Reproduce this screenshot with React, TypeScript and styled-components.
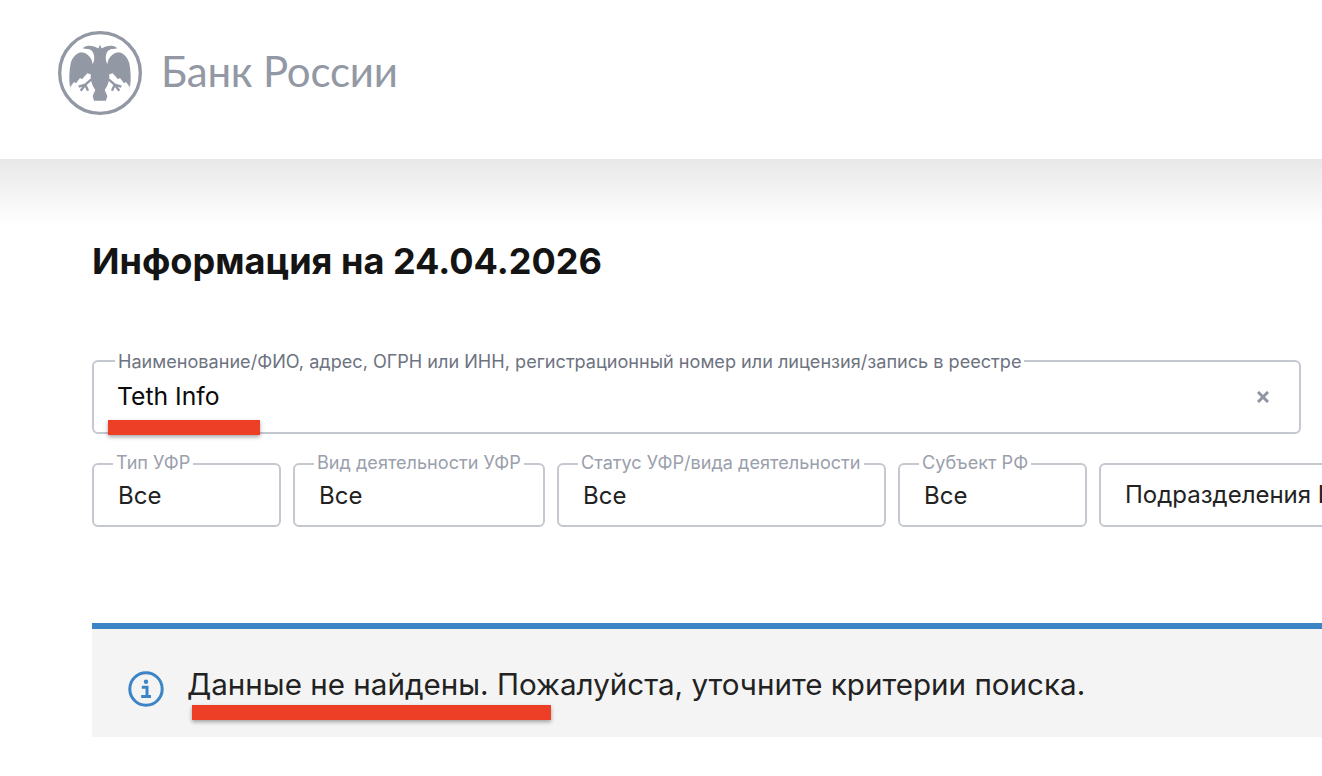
import React from 'react';
import styled, { createGlobalStyle } from 'styled-components';

const GlobalStyle = createGlobalStyle`
  html, body {
    margin: 0;
    background: #fff;
  }
  body {
    font-family: Inter, "Liberation Sans", sans-serif;
  }
`;

const Page = styled.div`
  position: relative;
  width: 1322px;
  height: 776px;
  overflow: hidden;
`;

const Header = styled.header`
  height: 159px;
  padding: 0 0 14px 58px;
  display: flex;
  align-items: center;
  gap: 19px;
  box-sizing: border-box;
`;

const LogoText = styled.div`
  margin-bottom: 4px;
  font-family: Lato, "Open Sans", sans-serif;
  font-size: 42px;
  letter-spacing: -0.2px;
  color: #9298a4;
`;

const Main = styled.main`
  padding: 78px 0 0 92px;
  background: linear-gradient(#e8e8e8, #ffffff 66px) no-repeat;
`;

const Title = styled.h1`
  margin: 0 0 66px;
  font-size: 36.1px;
  line-height: 48px;
  font-weight: 700;
  color: #141414;
`;

const Field = styled.fieldset<{ $width: number; $height: number }>`
  box-sizing: border-box;
  flex: none;
  width: ${({ $width }) => $width}px;
  height: ${({ $height }) => $height}px;
  margin: 0;
  padding: 0;
  border: 2px solid #c5c9cf;
  border-radius: 6px;
  display: flex;
  align-items: center;
  justify-content: space-between;
`;

const Legend = styled.legend<{ $strong?: boolean }>`
  margin-left: ${({ $strong }) => ($strong ? 21 : 19)}px;
  padding: ${({ $strong }) => ($strong ? '0 3px' : '0 3px 4px')};
  font-size: 18.1px;
  line-height: 20px;
  white-space: nowrap;
  color: ${({ $strong }) => ($strong ? '#6d7380' : '#9aa0ac')};
`;

const SearchValue = styled.div`
  margin: -11px 0 0 23px;
  font-size: 24.7px;
  color: #0a0a0a;
`;

const ClearButton = styled.div`
  margin: -9px 30px 0 0;
  display: flex;
  color: #8f95a1;
`;

const Filters = styled.div`
  display: flex;
  gap: 12px;
  margin-top: 18px;
  align-items: flex-end;
`;

const FilterValue = styled.div<{ $wide?: boolean }>`
  margin: ${({ $wide }) => ($wide ? '-2px 0 0 24px' : '-10px 0 0 24px')};
  font-size: 24px;
  white-space: nowrap;
  color: #222;
`;

const Alert = styled.div`
  width: 1300px;
  height: 114px;
  box-sizing: border-box;
  margin-top: 96px;
  padding: 12px 0 0 36px;
  border-top: 6px solid #3b84c5;
  background: #f4f4f4;
  display: flex;
  align-items: center;
  gap: 23px;
`;

const AlertText = styled.div`
  margin-bottom: 10px;
  font-size: 29.6px;
  color: #222;
  white-space: nowrap;
`;

const Marker = styled.div<{ $left: number; $top: number; $width: number }>`
  position: absolute;
  left: ${({ $left }) => $left}px;
  top: ${({ $top }) => $top}px;
  width: ${({ $width }) => $width}px;
  height: 15px;
  background: #ec3f25;
  box-shadow: 0 2px 4px rgba(0, 0, 0, 0.35);
`;

const Logo = () => (
  <svg width="84" height="84" viewBox="24 19 252 252" fill="#9298a4">
    <circle cx="150" cy="145" r="121" fill="none" stroke="#9298a4" strokeWidth="10" />
    {[false, true].map((mirror) => (
      <g key={String(mirror)} transform={mirror ? 'matrix(-1 0 0 1 300 0)' : undefined}>
        {/* head and neck */}
        <path d="M150 110 L150 74 C140 68 124 62 112 64 C106 65 102 67 98 71 L110 73 C122 72 130 80 132 92 C134 102 132 112 128 118 L150 130 Z" />
        {/* wing */}
        <path d="M128 118 C126 100 116 90 102 84 C96 82 92 82 88 84 C74 90 66 102 62 116 C58 138 56 162 60 188 L72 172 L78 176 L90 160 L96 164 L112 146 L126 150 Z" />
        {/* body and tail */}
        <path d="M150 110 L124 120 L122 160 C124 174 128 186 136 196 L128 214 L132 228 L150 228 Z" />
        {/* foot */}
        <path d="M124 164 L106 180 L86 186 M106 180 L92 198 M106 180 L114 198" fill="none" stroke="#9298a4" strokeWidth="7" />
      </g>
    ))}
    <path d="M150 60 L143 76 L150 100 L157 76 Z" />
  </svg>
);

const InfoIcon = () => (
  <svg width="36" height="36" viewBox="0 0 36 36" fill="none" stroke="#3b84c5" style={{ flex: 'none' }}>
    <circle cx="18" cy="18" r="16.2" strokeWidth="3" />
    <circle cx="18" cy="10.8" r="2.2" fill="#3b84c5" stroke="none" />
    <path d="M13.8 16.2 H19 V25.6 M13.2 25.6 H23" strokeWidth="3" />
  </svg>
);

const filters = [
  { label: 'Тип УФР', width: 189 },
  { label: 'Вид деятельности УФР', width: 252 },
  { label: 'Статус УФР/вида деятельности', width: 329 },
  { label: 'Субъект РФ', width: 189 }
];

const App = () => (
  <Page>
    <GlobalStyle />
    <Header>
      <Logo />
      <LogoText>Банк России</LogoText>
    </Header>
    <Main>
      <Title>Информация на 24.04.2026</Title>
      <Field $width={1209} $height={83}>
        <Legend $strong>Наименование/ФИО, адрес, ОГРН или ИНН, регистрационный номер или лицензия/запись в реестре</Legend>
        <SearchValue>Teth Info</SearchValue>
        <ClearButton>
          <svg width="12" height="12" viewBox="0 0 12 12" stroke="currentColor" strokeWidth="3">
            <path d="M1 1 L11 11 M11 1 L1 11" />
          </svg>
        </ClearButton>
      </Field>
      <Filters>
        {filters.map(({ label, width }) => (
          <Field key={label} $width={width} $height={75}>
            <Legend>{label}</Legend>
            <FilterValue>Все</FilterValue>
          </Field>
        ))}
        <Field $width={300} $height={64}>
          <FilterValue $wide>Подразделения Банка России</FilterValue>
        </Field>
      </Filters>
      <Alert>
        <InfoIcon />
        <AlertText>Данные не найдены. Пожалуйста, уточните критерии поиска.</AlertText>
      </Alert>
    </Main>
    <Marker $left={108} $top={420} $width={152} />
    <Marker $left={192} $top={705} $width={359} />
  </Page>
);

export default App;
